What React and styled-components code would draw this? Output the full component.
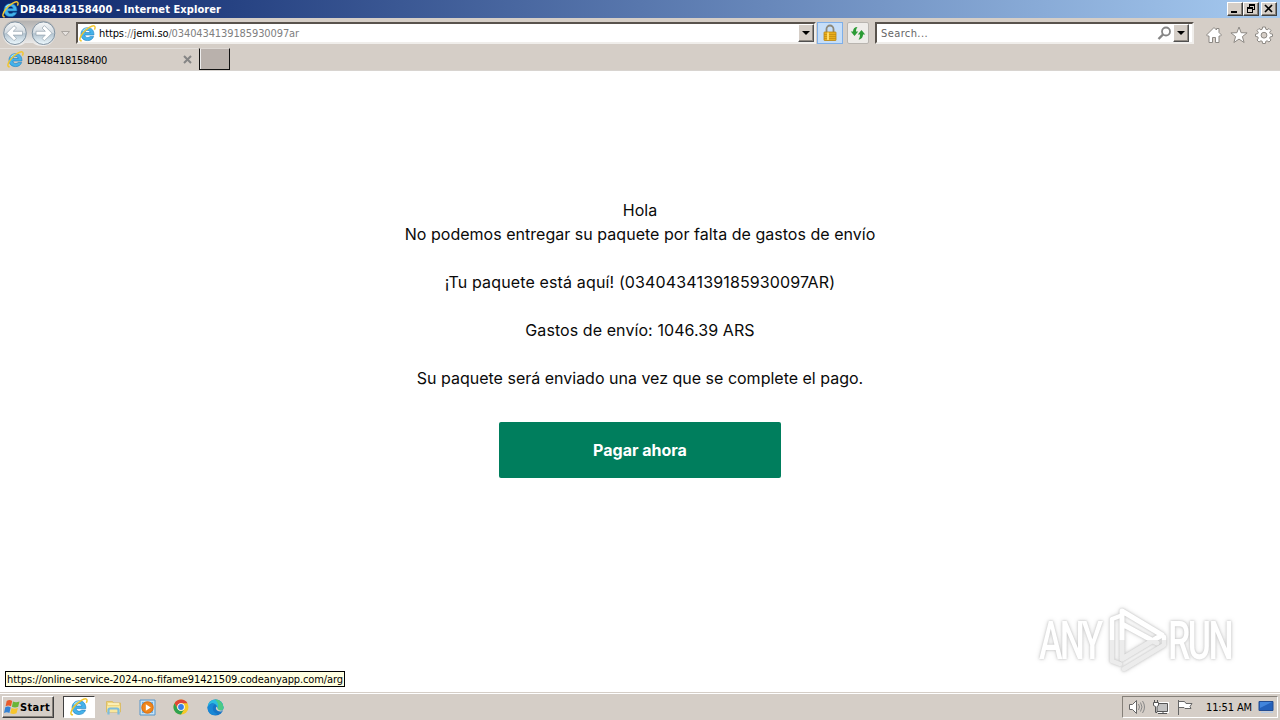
import React from 'react';
import styled, { createGlobalStyle } from 'styled-components';

const lines = [
  { text: 'Hola' },
  { text: 'No podemos entregar su paquete por falta de gastos de envío', spacing: 0.025 },
  { text: '¡Tu paquete está aquí! (0340434139185930097AR)', spacing: 0.14 },
  { text: 'Gastos de envío: 1046.39 ARS', spacing: 0.08 },
  { text: 'Su paquete será enviado una vez que se complete el pago.' },
];

const App = () => {
  return (
    <Desktop>
      <GlobalStyle />
      <TitleBar>
        <IeIcon size={17} />
        <Label $bold $color="#fff" $width={201}>DB48418158400 - Internet Explorer</Label>
        <WindowButtons>
          <WindowButton>
            <svg width="14" height="11"><path d="M3 8h6v2H3z" /></svg>
          </WindowButton>
          <WindowButton>
            <svg width="14" height="11" fill="none" stroke="#000" shapeRendering="crispEdges">
              <path d="M5.5 4V1.5h5v5H9M5 2h6M3.5 4.5h5v5h-5zM3 5h6" />
            </svg>
          </WindowButton>
          <WindowButton $gap>
            <svg width="14" height="11"><path d="M3 2l7 7M10 2L3 9" stroke="#000" strokeWidth="1.7" /></svg>
          </WindowButton>
        </WindowButtons>
      </TitleBar>

      <NavBar>
        <NavArrows />
        <AddressBar>
          <IeIcon size={17} />
          <Label $width={200}>https<i>://</i>jemi.so<i>/0340434139185930097ar</i></Label>
          <DropButton />
        </AddressBar>
        <LockButton>
          <svg width="16" height="19" viewBox="0 0 16 19">
            <path d="M4.500 9V5a3.500 3.500 0 0 1 7 0V9" fill="none" stroke="#8d8878" strokeWidth="1.800" />
            <rect x="2" y="8" width="12" height="8.500" rx=".5" fill="#e9ae1d" stroke="#b98510" strokeWidth=".8" />
            <path d="M2 10.500h12M2 12.500h12M2 14.500h12" stroke="#c08a10" strokeWidth=".7" />
            <path d="M5 8.500h2v7.500H5z" fill="#ffdc68" />
          </svg>
        </LockButton>
        <RefreshButton>
          <svg width="16" height="16" viewBox="0 0 16 16" fill="#2b9b35">
            <path d="M7.500 2C4.500 2 3 4 3 6.500H.8l3.700 4.500 3.700-4.500H6C6 4.500 6.500 3.200 7.500 2z" />
            <path d="M8.500 14.500C11.500 14.500 13 12 13 9.500H15.200L11.500 5 7.800 9.500H10C10 11.500 9.600 13.300 8.500 14.500z" />
          </svg>
        </RefreshButton>
        <SearchBox>
          <Label $color="#666" $width={47}>Search...</Label>
          <svg width="15" height="15" viewBox="0 0 15 15" fill="none" stroke="#858585">
            <circle cx="9" cy="5.500" r="4" strokeWidth="1.800" />
            <path d="M6 8.500L1.500 13" strokeWidth="2.400" />
          </svg>
          <DropButton />
        </SearchBox>
        <Tools>
          <svg width="18" height="18" viewBox="0 0 18 18">
            <path d="M1.500 9L9 1.500l2.500 2.500V2.500h2.500v4L16.500 9l-1 1H14v6.500h-3.500v-5h-3v5H4V10H2.500z" />
          </svg>
          <svg width="18" height="18" viewBox="0 0 18 18">
            <path d="M9 1l2.100 5.700 6 .2-4.700 3.700 1.700 5.900L9 13.100l-5.100 3.400 1.700-5.900L.9 6.900l6-.2z" />
          </svg>
          <svg width="18" height="18" viewBox="0 0 18 18">
            <path d="M7.600 1h2.800l.4 2.200 1.300.6L14 2.500l2 2-1.300 1.900.6 1.300 2.200.4v2.300l-2.200.4-.6 1.300 1.300 1.900-2 2-1.900-1.200-1.300.5-.4 2.200H7.600l-.4-2.200-1.300-.5L4 16l-2-2 1.300-1.900-.6-1.300-2.200-.4V8.100l2.200-.4.6-1.300L2 4.500l2-2 1.900 1.300 1.300-.6z" />
            <circle cx="9" cy="9.200" r="2.900" fill="#d5cec7" />
          </svg>
        </Tools>
      </NavBar>

      <TabStrip>
        <Tab>
          <IeIcon size={17} />
          <Label $width={80}>DB48418158400</Label>
          <svg width="9" height="9" stroke="#858585" strokeWidth="2"><path d="M1 1l7 7M8 1L1 8" /></svg>
        </Tab>
        <NewTab />
      </TabStrip>

      <Page>
        <Message>
          {lines.map((line) => (
            <Line key={line.text} $spacing={line.spacing}>{line.text}</Line>
          ))}
        </Message>
        <PayButton type="button">Pagar ahora</PayButton>
        <Watermark />
        <StatusTip>
          <Label $width={336}>https://online-service-2024-no-fifame91421509.codeanyapp.com/arg</Label>
        </StatusTip>
      </Page>

      <Taskbar>
        <StartButton>
          <WindowsFlag />
          <Label $bold $width={30}>Start</Label>
        </StartButton>
        <TaskButton $active><IeIcon size={18} /></TaskButton>
        <TaskButton><FolderIcon /></TaskButton>
        <TaskButton><MediaIcon /></TaskButton>
        <TaskButton><ChromeIcon /></TaskButton>
        <TaskButton><EdgeIcon /></TaskButton>
        <Tray>
          <svg width="18" height="16" viewBox="0 0 18 16" fill="#fff" stroke="#666">
            <path d="M1.500 5.500h3l4-4v13l-4-4h-3z" />
            <path d="M10.500 5q2 3 0 6M12.500 3.500q3 4.500 0 9M14.500 2q4 6 0 12" fill="none" stroke="#888" />
          </svg>
          <svg width="18" height="17" viewBox="0 0 18 17" fill="#fff" stroke="#555">
            <path d="M4.500 4.500h11v8h-11z" stroke="#fff" strokeWidth="3" />
            <path d="M4.500 4.500h11v8h-11z" fill="#c2c2c2" />
            <path d="M6 14.500h9M11 13v2" />
            <path d="M1.500 3.500h5v3l-1.500 1v6H3.500v-6l-2-1zM2.500 1v2M5.500 1v2" />
          </svg>
          <svg width="18" height="17" viewBox="0 0 18 17" fill="#fff" stroke="#666">
            <path d="M2.500 1v15M2.500 2.500h6l1.500 2h6l-2 3 1 2H9l-1-1H2.500z" />
          </svg>
          <Clock><Label $width={46}>11:51 AM</Label></Clock>
          <svg width="16" height="14" viewBox="0 0 16 14">
            <path d="M1 1.500h14v9H1z" fill="#2461bb" stroke="#234c91" />
            <path d="M2 2h12L2 8z" fill="#4285dc" />
            <path d="M3 11.500h12v1.500H3z" fill="#b9cbe2" />
          </svg>
        </Tray>
      </Taskbar>
    </Desktop>
  );
};

export default App;

// Keeps the condensed UI font at the width its slot expects
const Label = ({ $width, children, ...rest }) => {
  const ref = React.useRef(null);
  const [spacing, setSpacing] = React.useState(0);

  React.useLayoutEffect(() => {
    const natural = ref.current.getBoundingClientRect().width;
    setSpacing(($width - natural) / ref.current.textContent.length);
  }, [$width]);

  return <UiText ref={ref} style={{ letterSpacing: spacing }} {...rest}>{children}</UiText>;
};

const IeIcon = ({ size }) => (
  <svg width={size} height={size} viewBox="0 0 18 18">
    <path
      d="M15.800 10.600H6.200c.2 1.800 1.300 2.700 3 2.700 1.200 0 2-.4 2.500-1.200h3.800c-.9 2.800-3.200 4.400-6.400 4.400-4.200 0-7-2.800-7-6.800s2.800-6.900 6.900-6.900c4.500 0 7 3 6.800 7.800zM6.300 8h5.500c-.2-1.500-1.200-2.300-2.700-2.300S6.600 6.500 6.300 8z"
      fill="#45b2ea"
      stroke="#1679bd"
      strokeWidth=".6"
    />
    <path d="M4 6.500c1.500-2 3.400-3 5.500-3" fill="none" stroke="#9be3fc" strokeWidth="1.200" />
    <path d="M3 16.800C-.5 17 .8 12.800 4 8.800 8 3.900 14.600-.5 16.500 1.300c.9.900.5 2.300-.2 3.600" fill="none" stroke="#f3c62e" strokeWidth="1.500" />
  </svg>
);

const NavArrows = () => (
  <svg width="76" height="30" viewBox="0 0 76 30">
    <defs>
      <linearGradient id="orb" x1="0" y1="0" x2="0" y2="1">
        <stop offset="0" stopColor="#f6f7f8" />
        <stop offset=".48" stopColor="#d3dbe1" />
        <stop offset=".52" stopColor="#b3c3cf" />
        <stop offset="1" stopColor="#eefaff" />
      </linearGradient>
      <linearGradient id="rim" x1="0" y1="0" x2="0" y2="1">
        <stop offset="0" stopColor="#b3b1b0" />
        <stop offset="1" stopColor="#f1f0ef" />
      </linearGradient>
    </defs>
    <path d="M15 2.500h28a12.500 12.500 0 0 1 0 25.500q-7 0-10-3h-8q-3 3-10 3a12.500 12.500 0 0 1 0-25.500z" fill="url(#rim)" />
    <g fill="url(#orb)" stroke="#8092a1">
      <circle cx="15" cy="15.200" r="11.300" />
      <circle cx="43.500" cy="15.200" r="11.300" />
    </g>
    <g fill="#fff" stroke="#93a2ae" strokeWidth=".7">
      <path d="M6.500 15.200l7.500-7.500 2.500 2.300-3.300 3.300h9.300v3.800h-9.300l3.300 3.300-2.500 2.300z" />
      <path d="M52 15.200l-7.500-7.500-2.500 2.300 3.300 3.300H36v3.800h9.300L42 20.400l2.500 2.300z" />
    </g>
    <path d="M61.500 13.500h8l-4 4.500z" fill="#e6e2df" stroke="#aaa5a0" />
  </svg>
);

const WindowsFlag = () => (
  <svg width="16" height="16" viewBox="0 0 16 16">
    <path d="M2.700 2q2.700-1.900 5.500 0L7 7.300q-2.600-1.600-5.400 0z" fill="#e95b2b" />
    <path d="M9 2.600q2.800 1.500 6.500 0l-1.300 5.200q-3.200 1.600-6.300 0z" fill="#69b538" />
    <path d="M1.300 8.300q2.700-1.500 5.400.1L5.400 14q-2.500-1.600-5.400 0z" fill="#3482d4" />
    <path d="M7.600 8.900q2.700 1.500 6.300 0l-1.400 5.400q-3 1.500-6.300 0z" fill="#f7c52c" />
  </svg>
);

const FolderIcon = () => (
  <svg width="17" height="17" viewBox="0 0 17 17">
    <path d="M1.500 2.500h6l1 1.500h7v9h-14z" fill="#efd67f" stroke="#dbbd68" />
    <path d="M3 5h11" stroke="#fff7c8" strokeWidth="1.500" />
    <path d="M2 7h13v6H2z" fill="#f9e79c" />
    <path d="M3.500 15.500V11q0-1.500 1.500-1.500h7q1.500 0 1.500 1.500v4.500" fill="none" stroke="#7cbcdc" strokeWidth="2.200" />
  </svg>
);

const MediaIcon = () => (
  <svg width="17" height="17" viewBox="0 0 17 17">
    <path d="M1 1h15v15H1z" fill="#c6e2f6" stroke="#5696ca" />
    <path d="M3 3h11v11H3z" fill="#73afdc" />
    <circle cx="8.500" cy="8.500" r="5.700" fill="#ef861c" stroke="#dc6c0a" />
    <path d="M6.800 5.300v6.400l5-3.200z" fill="#fff" />
  </svg>
);

const ChromeIcon = () => (
  <svg width="16" height="16" viewBox="0 0 16 16">
    <circle cx="8" cy="8" r="7.500" fill="#f5c928" />
    <path d="M1.500 4.250A7.500 7.500 0 0 1 14.500 4.250H8A3.750 3.750 0 0 0 4.750 9.900z" fill="#df4637" />
    <path d="M1.500 4.250L4.750 9.900A3.750 3.750 0 0 0 11.250 9.900L8 15.500A7.500 7.500 0 0 1 1.500 4.250z" fill="#2da250" />
    <circle cx="8" cy="8" r="3.800" fill="#fff" />
    <circle cx="8" cy="8" r="2.900" fill="#397fe5" />
  </svg>
);

const EdgeIcon = () => (
  <svg width="17" height="17" viewBox="0 0 17 17">
    <circle cx="8.500" cy="8.500" r="8" fill="#1674c5" />
    <path d="M.5 8.500a8 8 0 0 1 16 0q0 3-3.500 3c-2.500 0-3.200-1-2.500-2C11.500 7 5-.5.5 8.500z" fill="#2cbbe0" />
    <path d="M8 .5a8 8 0 0 1 8.500 8q0 3-3.500 3c-2.500 0-3.200-1-2.500-2 1.500-3.500.5-6-2.500-9z" fill="#4bca85" />
    <path d="M.5 8.500C2 4.800 6 4 8 5.500c-3.500 1.300-3.200 8 2.500 9.500-5 2.800-10-.5-10-6.500z" fill="#1987d5" />
    <path d="M10 7.500c-2.500 1-1 6.500 6.500 4.500l-1.200 2.500H17V11q-5.500 1.500-6.500-1.500z" fill="#d5cec7" />
  </svg>
);

const Watermark = () => (
  <Logo width="206" height="70" viewBox="0 0 206 70">
    <defs>
      <linearGradient id="mark" x1="0" y1="0" x2="0" y2="70" gradientUnits="userSpaceOnUse">
        <stop offset=".5" stopColor="#fff" />
        <stop offset=".5" stopColor="#ececec" />
      </linearGradient>
    </defs>
    <g fill="url(#mark)" fontFamily="Roboto, sans-serif" fontSize="53" fontWeight="500">
      <text transform="translate(3 54) scale(.67 1)" textLength="96">ANY</text>
      <text transform="translate(132 54) scale(.67 1)" textLength="98">RUN</text>
    </g>
    <g fill="none" stroke="url(#mark)" strokeWidth="5" strokeLinejoin="round" strokeLinecap="round">
      <path d="M86 54V6l40 24-30 18-10 6V19l35 19" />
      <path d="M84 11l-8 3v42l8 3M88 64l40-24v-8" strokeWidth="4.500" />
    </g>
  </Logo>
);

// Styled Components

const GlobalStyle = createGlobalStyle`
  body {
    margin: 0;
    overflow: hidden;
    background: #fff;
  }

  * {
    box-sizing: border-box;
  }

  svg {
    display: block;
    flex-shrink: 0;
  }
`;

const Desktop = styled.div`
  display: flex;
  flex-direction: column;
  width: 1280px;
  height: 720px;
  background: #d5cec7;
`;

const UiText = styled.span`
  padding-top: 1px;
  font-family: 'DejaVu Sans Condensed', 'DejaVu Sans', sans-serif;
  font-stretch: condensed;
  font-size: 11px;
  line-height: 14px;
  font-weight: ${(props) => (props.$bold ? 700 : 400)};
  color: ${(props) => props.$color || '#000'};
  white-space: nowrap;

  i {
    font-style: normal;
    color: #808080;
  }
`;

const TitleBar = styled.header`
  display: flex;
  align-items: center;
  gap: 1px;
  height: 18px;
  padding: 0 3px 0 2px;
  background: linear-gradient(90deg, #0a246a, #a6caf0);
`;

const WindowButtons = styled.div`
  display: flex;
  margin-left: auto;
`;

const WindowButton = styled.div`
  width: 16px;
  height: 14px;
  margin-left: ${(props) => (props.$gap ? '2px' : '0')};
  background: #d5cec7;
  border: 1px solid;
  border-color: #fff #404040 #404040 #fff;
  box-shadow: inset -1px -1px #858079;
`;

const NavBar = styled.div`
  display: flex;
  align-items: flex-start;
  height: 30px;
`;

const AddressBar = styled.div`
  display: flex;
  align-items: center;
  width: 740px;
  height: 22px;
  margin-top: 4px;
  padding: 0 0 0 1px;
  gap: 3px;
  background: #fff;
  border: 2px solid;
  border-color: #59534d #f0eeeb #f0eeeb #59534d;

  ${UiText} {
    padding-top: 2px;
  }
`;

const DropButton = styled.div`
  display: flex;
  align-items: center;
  justify-content: center;
  width: 16px;
  height: 18px;
  margin-left: auto;
  background: #d5cec7;
  border: 1px solid;
  border-color: #fff #505050 #505050 #fff;
  box-shadow: inset -1px -1px #918b84;

  &::before {
    content: '';
    border: 4px solid transparent;
    border-top-color: #000;
    border-bottom: 0;
  }
`;

const LockButton = styled.div`
  display: flex;
  align-items: center;
  justify-content: center;
  width: 26px;
  height: 22px;
  margin: 4px 0 0 1px;
  background: #c6def8;
  border: 1px solid #7eafe9;
`;

const RefreshButton = styled(LockButton)`
  width: 22px;
  margin-left: 4px;
  background: #eeece9;
  border-color: #b9b5b0;
  border-radius: 2px;
`;

const SearchBox = styled.div`
  display: flex;
  align-items: center;
  width: 319px;
  height: 22px;
  margin: 4px 0 0 6px;
  padding: 0 3px 0 4px;
  background: #fff;
  border: 2px solid;
  border-color: #59534d #f0eeeb #f0eeeb #59534d;

  ${UiText} {
    padding-top: 2px;
  }

  svg {
    margin-left: auto;
  }

  ${DropButton} {
    margin-left: 1px;
  }
`;

const Tools = styled.div`
  display: flex;
  gap: 7px;
  margin: 8px 0 0 11px;

  svg {
    fill: #fff;
    stroke: #8d8984;
  }
`;

const TabStrip = styled.div`
  display: flex;
  height: 23px;
  border-bottom: 1px solid #d8d4d0;
`;

const Tab = styled.div`
  display: flex;
  align-items: center;
  gap: 3px;
  width: 198px;
  padding: 0 6px 0 7px;
  border-top: 1px solid #e3dfdb;

  ${UiText} {
    padding-top: 2px;
  }

  svg:last-child {
    margin-left: auto;
  }
`;

const NewTab = styled.div`
  width: 31px;
  margin-left: 1px;
  background: #b9b1ac;
  border: 1px solid #111;
  border-top-color: #ddd8d3;
  box-shadow: inset 1px 0 #eee;
`;

const Page = styled.main`
  position: relative;
  display: flex;
  flex-direction: column;
  align-items: center;
  flex: 1;
  padding-top: 127px;
  background: #fff;
  font-family: Inter, sans-serif;
`;

const Message = styled.div`
  text-align: center;
`;

const Line = styled.p`
  margin: 0 0 24px;
  font-size: 16px;
  line-height: 24px;
  letter-spacing: ${(props) => props.$spacing || 0}px;
  color: #0a0a0a;

  &:first-child {
    margin-bottom: 0;
  }
`;

const PayButton = styled.button`
  width: 282px;
  height: 56px;
  margin-top: 8px;
  border: none;
  border-radius: 2px;
  background: #007e5d;
  color: #fff;
  font-family: Inter, sans-serif;
  font-size: 16px;
  font-weight: 700;
`;

const Logo = styled.svg`
  position: absolute;
  right: 38px;
  bottom: 17px;
  filter: drop-shadow(0 0 1px #c4c4c4) drop-shadow(0 0 2px #dddddd);
`;

const StatusTip = styled.div`
  position: absolute;
  left: 5px;
  bottom: 5px;
  width: 340px;
  height: 16px;
  padding-left: 1px;
  display: flex;
  align-items: center;
  background: #ffffe1;
  border: 1px solid #000;
`;

const Taskbar = styled.footer`
  display: flex;
  align-items: flex-start;
  height: 28px;
  padding: 3px 2px 0;
  background: #d5cec7;
  border-top: 1px solid #d5cec7;
  box-shadow: inset 0 1px #fff;
`;

const StartButton = styled.div`
  display: flex;
  align-items: center;
  gap: 1px;
  width: 52px;
  height: 22px;
  margin-right: 9px;
  padding-left: 1px;
  border: 1px solid;
  border-color: #fff #404040 #404040 #fff;
  box-shadow: inset -1px -1px #858079;

  svg {
    margin-right: -1px;
  }
`;

const TaskButton = styled.div`
  display: flex;
  align-items: center;
  justify-content: center;
  width: 32px;
  height: 22px;
  margin-right: 2px;
  background: ${(props) => (props.$active ? '#fff' : 'transparent')};
  border: 1px solid transparent;
  ${(props) => props.$active && 'border-color: #404040 #fff #fff #404040;'}
`;

const Tray = styled.div`
  display: flex;
  align-items: center;
  gap: 6px;
  width: 156px;
  height: 22px;
  margin-left: auto;
  padding-left: 5px;
  border: 1px solid;
  border-color: #858079 #fff #fff #858079;
`;

const Clock = styled.div`
  display: flex;
  margin-left: 6px;
`;
